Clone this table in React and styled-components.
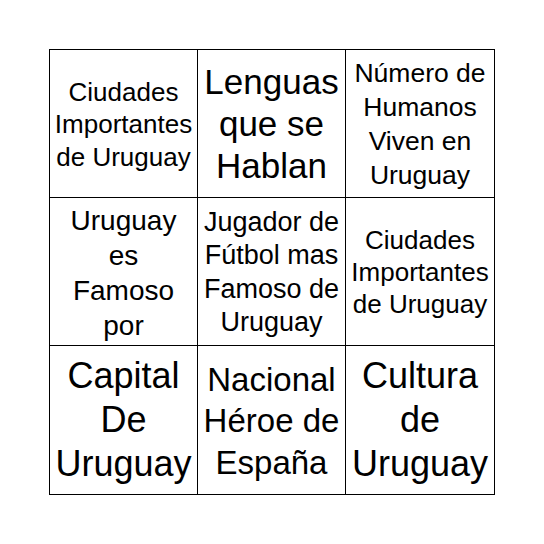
import React from 'react'
import styled, { createGlobalStyle } from 'styled-components'

const GlobalStyle = createGlobalStyle`
    html, body {
        margin:0;
        padding:0;
        background:#fff;
    }
    body {
        font-family:'Liberation Sans', Arial, sans-serif;
    }
`;

const Page = styled.div`
    width:544px;
    height:544px;
    padding:49px 0 0 49px;
    box-sizing:border-box;
`;

const Card = styled.div`
    display:grid;
    grid-template-columns:148px 148px 149px;
    grid-template-rows:148px 148px 149px;
    width:446px;
    border-top:1px solid #000;
    border-left:1px solid #000;
    box-sizing:border-box;
`;

const Cell = styled.div`
    display:flex;
    align-items:center;
    justify-content:center;
    border-right:1px solid #000;
    border-bottom:1px solid #000;
    padding:${({shift}) => shift || 0}px 2px 0;
    text-align:center;
    color:#000;
    font-size:${({size}) => size}px;
    line-height:${({lh}) => lh}px;
    overflow:hidden;
`;

const cells = [
    { text: ['Ciudades', 'Importantes', 'de Uruguay'], size: 26, lh: 32.5, shift: 2 },
    { text: ['Lenguas', 'que se', 'Hablan'], size: 35, lh: 42 },
    { text: ['Número de', 'Humanos', 'Viven en', 'Uruguay'], size: 26.5, lh: 34, shift: 1 },
    { text: ['Uruguay', 'es', 'Famoso', 'por'], size: 28, lh: 35, shift: 2 },
    { text: ['Jugador de', 'Fútbol mas', 'Famoso de', 'Uruguay'], size: 27, lh: 33.5, shift: 2 },
    { text: ['Ciudades', 'Importantes', 'de Uruguay'], size: 26, lh: 31.7, shift: 3 },
    { text: ['Capital', 'De', 'Uruguay'], size: 36, lh: 44 },
    { text: ['Nacional', 'Héroe de', 'España'], size: 33, lh: 41.5, shift: 2 },
    { text: ['Cultura', 'de', 'Uruguay'], size: 36, lh: 44 },
];

export default function App() {
    return (
        <Page>
            <GlobalStyle />
            <Card>
                {cells.map((c, i) => (
                    <Cell key={i} size={c.size} lh={c.lh} shift={c.shift}>
                        <div>
                            {c.text.map((line, j) => (
                                <div key={j}>{line}</div>
                            ))}
                        </div>
                    </Cell>
                ))}
            </Card>
        </Page>
    )
}
